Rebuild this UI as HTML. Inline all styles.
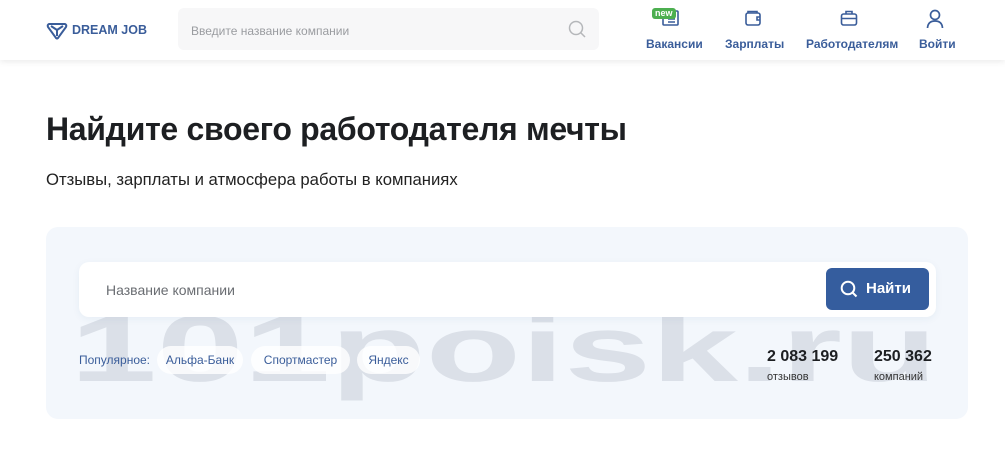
<!DOCTYPE html>
<html><head><meta charset="utf-8"><style>
*{margin:0;padding:0;box-sizing:border-box}
body{width:1005px;height:450px;background:#fff;font-family:"Liberation Sans",sans-serif;position:relative;overflow:hidden;color:#1f2124}
.hdr{position:absolute;left:0;top:0;width:1005px;height:60px;background:#fff;box-shadow:0 2px 6px rgba(0,0,0,.08)}
.logo{position:absolute;left:46px;top:19px;display:flex;align-items:center;color:#3a5d9a;font-weight:bold;font-size:12.5px}
.hs{position:absolute;left:178px;top:8px;width:421px;height:42px;background:#f7f7f8;border-radius:6px;font-size:12px;color:#9a9ca0;padding:16px 0 0 13px}
.nav{position:absolute;top:37px;font-size:12px;color:#3a5d9a;font-weight:bold}
.ic{position:absolute;top:9px}
h1{position:absolute;left:46px;top:111px;font-size:32px;font-weight:bold;color:#1d1f22;letter-spacing:-.3px}
.sub{position:absolute;left:46px;top:170px;font-size:16.7px;color:#222}
.box{position:absolute;left:46px;top:227px;width:922px;height:192px;background:#f3f7fc;border-radius:12px}
.inp{position:absolute;left:79px;top:262px;width:857px;height:55px;background:#fff;border-radius:10px;box-shadow:0 2px 8px rgba(40,80,140,.06);font-size:14px;color:#6a6d72;padding:20px 0 0 27px;z-index:2}
.btn{position:absolute;left:826px;top:268px;width:103px;height:42px;background:#355d9e;border-radius:6px;color:#fff;font-weight:bold;font-size:15px;padding:12px 0 0 40px;z-index:3}
.wm{position:absolute;left:70px;top:302px;font-size:94px;line-height:1;font-weight:bold;color:rgba(150,158,172,.26);white-space:nowrap;transform:scaleX(1.66);transform-origin:0 0}
.pop{position:absolute;top:353px;font-size:12px;color:#3a5d9a;z-index:2}
.chip{position:absolute;top:346px;height:28px;background:rgba(255,255,255,.8);border-radius:14px;font-size:12px;color:#3a5d9a;padding:7px 0 0 0;text-align:center;z-index:2}
.num{position:absolute;top:348px;font-size:16px;font-weight:bold;color:#1d1f22}
.lab{position:absolute;top:371px;font-size:11px;color:#333}
</style></head><body>
<div class="hdr">
 <div class="logo"><svg width="22" height="22" viewBox="0 0 22 22" fill="none" stroke="#3a5d9a" stroke-width="2"><path d="M3 5 L19 5 Q21 6 20 8 L12 19 Q11 20 10 19 L2 8 Q1 6 3 5Z"/><path d="M5 7 L11 11 L17 7 M11 11 V17"/></svg><span style="margin-left:4px">DREAM JOB</span></div>
 <div class="hs">Введите название компании
  <svg style="position:absolute;right:13px;top:12px" width="18" height="18" viewBox="0 0 18 18" fill="none" stroke="#b5b7ba" stroke-width="1.5"><circle cx="8" cy="8" r="6.5"/><path d="M12.5 12.5 L17 17"/></svg></div>
 <svg class="ic" style="left:660px" width="20" height="18" viewBox="0 0 20 18" fill="none" stroke="#3a5d9a" stroke-width="1.6"><rect x="3" y="2" width="15" height="14" rx="1"/><path d="M8 7h7M8 10h7M8 13h7"/></svg>
 <div style="position:absolute;left:652px;top:8px;background:#4caf50;color:#fff;font-size:9px;font-weight:bold;border-radius:3px;padding:0 3px;line-height:11px">new</div>
 <div class="nav" style="left:646px">Вакансии</div>
 <svg class="ic" style="left:744px" width="18" height="18" viewBox="0 0 18 18" fill="none" stroke="#3a5d9a" stroke-width="1.6"><rect x="2" y="4" width="14" height="12" rx="2"/><path d="M4 4 V2.5 H13 V4"/><path d="M16 8h-3v3h3"/></svg>
 <div class="nav" style="left:725px">Зарплаты</div>
 <svg class="ic" style="left:840px" width="18" height="18" viewBox="0 0 18 18" fill="none" stroke="#3a5d9a" stroke-width="1.6"><rect x="1.5" y="5" width="15" height="11" rx="2"/><path d="M6 5V2.5h6V5M1.5 9.5h15"/></svg>
 <div class="nav" style="left:806px">Работодателям</div>
 <svg class="ic" style="left:926px" width="18" height="20" viewBox="0 0 18 20" fill="none" stroke="#3a5d9a" stroke-width="1.7"><circle cx="9" cy="6" r="4.5"/><path d="M1.5 19 Q2 12 9 12 Q16 12 16.5 19"/></svg>
 <div class="nav" style="left:919px">Войти</div>
</div>
<h1>Найдите своего работодателя мечты</h1>
<div class="sub">Отзывы, зарплаты и атмосфера работы в компаниях</div>
<div class="box"></div>
<div class="inp">Название компании</div>
<div class="btn"><svg style="position:absolute;left:14px;top:12px" width="18" height="18" viewBox="0 0 18 18" fill="none" stroke="#fff" stroke-width="2"><circle cx="8" cy="8" r="6.3"/><path d="M12.5 12.5 L16.5 16.5"/></svg>Найти</div>
<div class="wm">101poisk.ru</div>
<div class="pop" style="left:79px">Популярное:</div>
<div class="chip" style="left:157px;width:86px">Альфа-Банк</div>
<div class="chip" style="left:251px;width:99px">Спортмастер</div>
<div class="chip" style="left:357px;width:63px">Яндекс</div>
<div class="num" style="left:767px">2 083 199</div>
<div class="lab" style="left:767px">отзывов</div>
<div class="num" style="left:874px">250 362</div>
<div class="lab" style="left:874px">компаний</div>
</body></html>
